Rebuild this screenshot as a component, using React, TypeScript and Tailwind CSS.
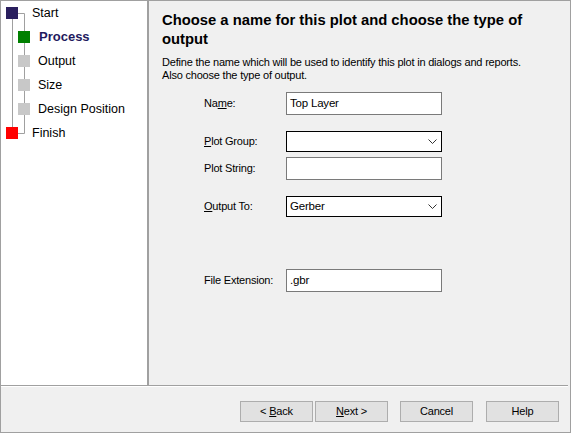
import React from "react";

const font = { fontFamily: '"Liberation Sans", Arial, sans-serif' };

function Chevron() {
    return (
        <svg width="9" height="6" viewBox="0 0 9 6" className="shrink-0">
            <path d="M0.5 0.5 L4.5 4.5 L8.5 0.5" fill="none" stroke="#333" strokeWidth="1" />
        </svg>
    );
}

function TextBox({ value }: { value?: string }) {
    return (
        <div className="w-[156px] h-[23px] bg-white border border-[#7a7a7a] flex items-center px-[3px] text-[11.5px] tracking-[-0.2px] text-black">
            {value}
        </div>
    );
}

function Combo({ value }: { value?: string }) {
    return (
        <div className="w-[156px] h-[21px] bg-white border border-black flex items-center justify-between pl-[3px] pr-[4px] text-[11.5px] tracking-[-0.2px] text-black">
            <span>{value}</span>
            <Chevron />
        </div>
    );
}

function Row({ label, children, className }: { label: React.ReactNode; children: React.ReactNode; className?: string }) {
    return (
        <div className={`flex items-center ${className ?? ""}`}>
            <div className="w-[82px] text-[11px] tracking-[-0.2px] text-black">{label}</div>
            {children}
        </div>
    );
}

function Btn({ children, className }: { children: React.ReactNode; className?: string }) {
    return (
        <div className={`w-[73px] h-[21px] bg-[#e1e1e1] border border-[#adadad] flex items-center justify-center text-[11px] tracking-[-0.2px] text-black ${className ?? ""}`}>
            <span className="whitespace-pre">{children}</span>
        </div>
    );
}

const steps = [
    { name: "Start", kind: "root", color: "bg-[#2a1f5e]" },
    { name: "Process", kind: "current", color: "bg-[#008000]" },
    { name: "Output", kind: "sub", color: "bg-[#c8c8c8]" },
    { name: "Size", kind: "sub", color: "bg-[#c8c8c8]" },
    { name: "Design Position", kind: "sub", color: "bg-[#c8c8c8]" },
    { name: "Finish", kind: "root", color: "bg-[#ff0000]" },
];

export default function App() {
    return (
        <div style={font} className="w-[571px] h-[433px] border border-[#a0a0a0] bg-[#f0f0f0] flex flex-col overflow-hidden">
            <div className="flex h-[384px]">
                {/* wizard steps */}
                <div className="relative w-[148px] bg-white border-r-2 border-[#a0a0a0]">
                    <svg className="absolute left-0 top-0" width="40" height="140">
                        <path d="M11.5 18 V126 M17 12.5 H23.5 V132.5 H17" fill="none" stroke="#a0a0a0" strokeWidth="1" />
                    </svg>
                    <div className="relative flex flex-col">
                        {steps.map((s) => (
                            <div key={s.name} className="h-[24px] flex items-center">
                                <div className={`w-[12px] h-[12px] ${s.color} ${s.kind === "root" ? "ml-[5px]" : "ml-[17px]"}`} />
                                <span
                                    className={`${s.kind === "root" ? "ml-[14px]" : "ml-[8px]"} ${s.kind === "current" ? "font-bold text-[#1f1a5e] text-[13px] ml-[9px]" : "text-black text-[12.5px]"}`}
                                >
                                    {s.name}
                                </span>
                            </div>
                        ))}
                    </div>
                </div>

                {/* page */}
                <div className="flex-1 pl-[13px] pt-[10px]">
                    <h1 className="text-[14.8px] font-bold leading-[19px] text-black w-[380px]">
                        Choose a name for this plot and choose the type of output
                    </h1>
                    <p className="mt-[7px] text-[11px] tracking-[-0.2px] leading-[13px] text-black">
                        Define the name which will be used to identify this plot in dialogs and reports.
                        <br />
                        Also choose the type of output.
                    </p>

                    <div className="pl-[42px] mt-[10px] flex flex-col">
                        <Row label={<>Na<u>m</u>e:</>}>
                            <TextBox value="Top Layer" />
                        </Row>
                        <Row label={<><u>P</u>lot Group:</>} className="mt-[16px]">
                            <Combo />
                        </Row>
                        <Row label="Plot String:" className="mt-[5px]">
                            <TextBox />
                        </Row>
                        <Row label={<><u>O</u>utput To:</>} className="mt-[16px]">
                            <Combo value="Gerber" />
                        </Row>
                        <Row label="File Extension:" className="mt-[52px]">
                            <TextBox value=".gbr" />
                        </Row>
                    </div>
                </div>
            </div>

            <div className="h-[2px] mr-[2px] border-t border-[#a0a0a0] bg-white" />

            <div className="flex-1 flex items-start pt-[14px] pl-[239px]">
                <Btn>&lt; <u>B</u>ack</Btn>
                <Btn className="ml-[2px]"><u>N</u>ext &gt;</Btn>
                <Btn className="ml-[12px]">Cancel</Btn>
                <Btn className="ml-[13px]">Help</Btn>
            </div>
        </div>
    );
}
